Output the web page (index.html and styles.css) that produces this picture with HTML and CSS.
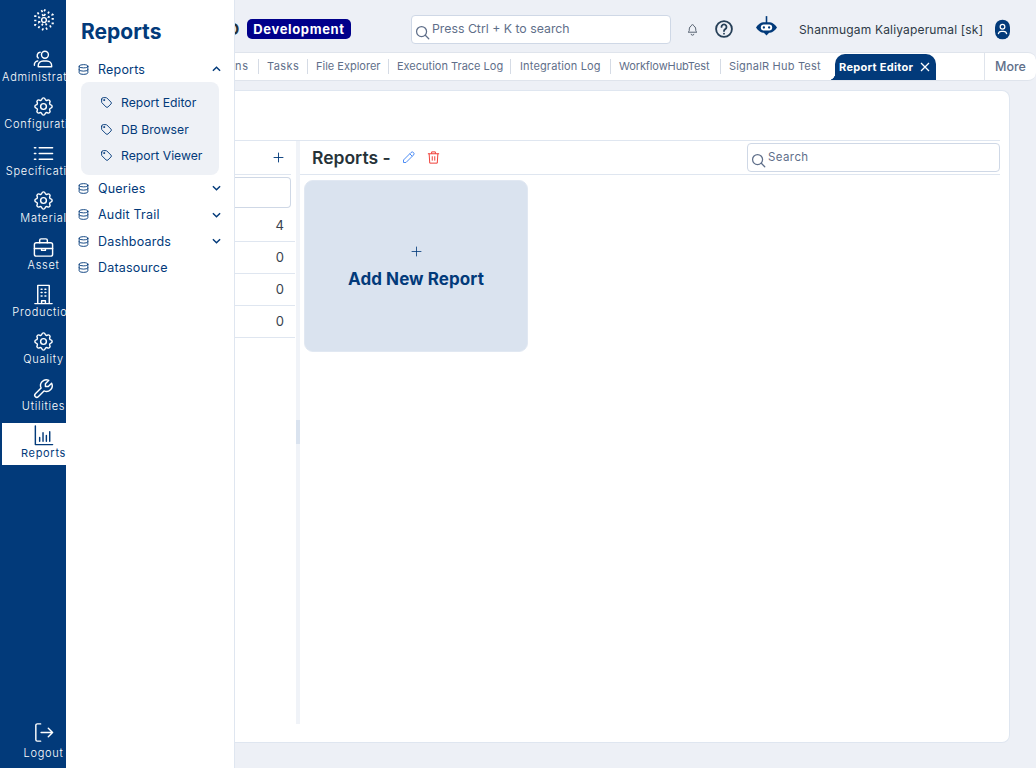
FILE: index.html
```html
<!DOCTYPE html>
<html lang="en">
<head>
    <meta charset="UTF-8">
    <meta name="viewport" content="width=device-width, initial-scale=1.0">
    <title>Reports</title>
    <link rel="stylesheet" href="styles.css">
</head>
<body>
    <svg class="sprite" aria-hidden="true">
        <symbol id="i-gear" viewBox="0 0 24 24"><path d="M10.325 4.317c.426-1.756 2.924-1.756 3.35 0a1.724 1.724 0 0 0 2.573 1.066c1.543-.94 3.31.826 2.37 2.37a1.724 1.724 0 0 0 1.065 2.572c1.756.426 1.756 2.924 0 3.35a1.724 1.724 0 0 0-1.066 2.573c.94 1.543-.826 3.31-2.37 2.37a1.724 1.724 0 0 0-2.572 1.065c-.426 1.756-2.924 1.756-3.35 0a1.724 1.724 0 0 0-2.573-1.066c-1.543.94-3.31-.826-2.37-2.37a1.724 1.724 0 0 0-1.065-2.572c-1.756-.426-1.756-2.924 0-3.35a1.724 1.724 0 0 0 1.066-2.573c-.94-1.543.826-3.31 2.37-2.37 1 .608 2.296.07 2.572-1.065z"/><circle cx="12" cy="12" r="3"/></symbol>
        <symbol id="i-users" viewBox="0 0 24 24"><circle cx="13.500" cy="7" r="3.600"/><path d="M6.500 19.500v-1a5 5 0 0 1 5-5h4a5 5 0 0 1 5 5v1z"/><path d="M8.500 4.500a3.500 3.500 0 0 0-2 6M6 13.500a4 4 0 0 0-3.500 4.500"/></symbol>
        <symbol id="i-list" viewBox="0 0 24 24"><path d="M7.500 6h14M7.500 12h14M7.500 18h14M2.500 6h1.500M2.500 12h1.500M2.500 18h1.500"/></symbol>
        <symbol id="i-case" viewBox="0 0 24 24"><rect x="2.500" y="7" width="19" height="14" rx="2"/><path d="M8 7V4.500a1.500 1.500 0 0 1 1.500-1.500h5a1.500 1.500 0 0 1 1.500 1.500V7M2.500 13h19M10 13v2h4v-2"/></symbol>
        <symbol id="i-building" viewBox="0 0 24 24"><path d="M3 21.500h18M6 21.500V2.500h12v19M10 21.500v-3h4v3M9.500 6.500h1M13.500 6.500h1M9.500 10h1M13.500 10h1M9.500 13.500h1M13.500 13.500h1"/></symbol>
        <symbol id="i-tool" viewBox="0 0 24 24"><path d="M7 10h3v-3l-3.500-3.500a6 6 0 0 1 8 8l6 6a2 2 0 0 1-3 3l-6-6a6 6 0 0 1-8-8z"/></symbol>
        <symbol id="i-chart" viewBox="0 0 24 24"><path d="M3.500 2v19.500h18M8 14v4M11.500 9v9M15 12v6M18.500 8v10"/></symbol>
        <symbol id="i-logout" viewBox="0 0 24 24"><path d="M9 3H5.500a1.500 1.500 0 0 0-1.500 1.500v15a1.500 1.500 0 0 0 1.500 1.500H9M9.500 12h12M17 7.500l4.500 4.500-4.500 4.500"/></symbol>
        <symbol id="i-db" viewBox="0 0 24 24"><ellipse cx="12" cy="6" rx="8" ry="3"/><path d="M4 6v6a8 3 0 0 0 16 0V6"/><path d="M4 12v6a8 3 0 0 0 16 0v-6"/></symbol>
        <symbol id="i-tag" viewBox="0 0 24 24"><circle cx="7.500" cy="7.500" r="1"/><path d="M3 6v5.172a2 2 0 0 0 .586 1.414l7.710 7.710a2.410 2.410 0 0 0 3.408 0l5.592-5.592a2.410 2.410 0 0 0 0-3.408l-7.710-7.710a2 2 0 0 0-1.414-.586H6a3 3 0 0 0-3 3z"/></symbol>
        <symbol id="i-search" viewBox="0 0 24 24"><circle cx="10.500" cy="10.500" r="8"/><path d="M16.500 16.500L22 22"/></symbol>
        <symbol id="i-plus" viewBox="0 0 24 24"><path d="M12 3v18M3 12h18"/></symbol>
    </svg>

    <div class="app">
        <nav class="rail">
            <div class="rail-logo">
                <svg class="rail-logo-icon" viewBox="0 0 24 24">
                    <path class="logo-dots" d="M12 1l9.500 5.500v11L12 23l-9.500-5.500v-11z"/>
                    <path class="logo-dots" d="M12 6l5.200 3v6L12 18l-5.200-3V9z"/>
                    <circle class="logo-ring" cx="12" cy="12" r="2.600"/>
                </svg>
            </div>
            <a class="rail-item"><svg class="ico"><use href="#i-users"/></svg><span>Administration</span></a>
            <a class="rail-item"><svg class="ico"><use href="#i-gear"/></svg><span>Configuration</span></a>
            <a class="rail-item"><svg class="ico"><use href="#i-list"/></svg><span>Specification</span></a>
            <a class="rail-item"><svg class="ico"><use href="#i-gear"/></svg><span>Material</span></a>
            <a class="rail-item"><svg class="ico"><use href="#i-case"/></svg><span>Asset</span></a>
            <a class="rail-item"><svg class="ico"><use href="#i-building"/></svg><span>Production</span></a>
            <a class="rail-item"><svg class="ico"><use href="#i-gear"/></svg><span>Quality</span></a>
            <a class="rail-item"><svg class="ico flip"><use href="#i-tool"/></svg><span>Utilities</span></a>
            <a class="rail-item active"><svg class="ico"><use href="#i-chart"/></svg><span>Reports</span></a>
            <a class="rail-item logout"><svg class="ico"><use href="#i-logout"/></svg><span>Logout</span></a>
        </nav>

        <aside class="panel">
            <h1 class="panel-title">Reports</h1>
            <div class="menu-row"><svg class="menu-ico"><use href="#i-db"/></svg><span>Reports</span>
                <svg class="chev up" viewBox="0 0 10 6"><path d="M1 1l4 4 4-4"/></svg></div>
            <div class="submenu">
                <div class="sub-row"><svg class="menu-ico"><use href="#i-tag"/></svg><span>Report Editor</span></div>
                <div class="sub-row"><svg class="menu-ico"><use href="#i-tag"/></svg><span>DB Browser</span></div>
                <div class="sub-row"><svg class="menu-ico"><use href="#i-tag"/></svg><span>Report Viewer</span></div>
            </div>
            <div class="menu-row"><svg class="menu-ico"><use href="#i-db"/></svg><span>Queries</span>
                <svg class="chev" viewBox="0 0 10 6"><path d="M1 1l4 4 4-4"/></svg></div>
            <div class="menu-row"><svg class="menu-ico"><use href="#i-db"/></svg><span>Audit Trail</span>
                <svg class="chev" viewBox="0 0 10 6"><path d="M1 1l4 4 4-4"/></svg></div>
            <div class="menu-row"><svg class="menu-ico"><use href="#i-db"/></svg><span>Dashboards</span>
                <svg class="chev" viewBox="0 0 10 6"><path d="M1 1l4 4 4-4"/></svg></div>
            <div class="menu-row"><svg class="menu-ico"><use href="#i-db"/></svg><span>Datasource</span></div>
        </aside>

        <main class="main">
            <header class="topbar">
                <span class="brand-end">O</span>
                <span class="env-badge">Development</span>
                <div class="global-search">
                    <svg class="search-ico"><use href="#i-search"/></svg>
                    <span>Press Ctrl + K to search</span>
                </div>
                <svg class="bell" viewBox="0 0 24 24"><path d="M10 5a2 2 0 1 1 4 0 7 7 0 0 1 4 6v3a4 4 0 0 0 2 3H4a4 4 0 0 0 2-3v-3a7 7 0 0 1 4-6M9.500 20a2.500 2.500 0 0 0 5 0"/></svg>
                <svg class="help" viewBox="0 0 24 24"><circle cx="12" cy="12" r="9.500"/><path d="M9 9.500a3 3 0 1 1 4.500 2.600c-1 .6-1.500 1.200-1.500 2.400M12 17.500v.1"/></svg>
                <svg class="bot" viewBox="0 0 24 26"><path class="bot-stem" d="M12 0v8"/><path class="bot-fill" d="M8 7h8c3 0 6 3 8 6-2 3-5 6-8 6h-1l-3 3-3-3H8c-3 0-6-3-8-6 2-3 5-6 8-6z"/><rect class="bot-eye" x="5.500" y="9.500" width="13" height="7" rx="3.500"/><circle class="bot-fill" cx="9" cy="13" r="1.300"/><circle class="bot-fill" cx="15" cy="13" r="1.300"/></svg>
                <span class="user-name">Shanmugam Kaliyaperumal [sk]</span>
                <svg class="avatar" viewBox="0 0 16 21"><rect class="bot-fill" width="16" height="21" rx="8"/><circle class="avatar-line" cx="8" cy="7.500" r="2.500"/><path class="avatar-line" d="M3.500 15.500a3.500 3.500 0 0 1 3.500-3h2a3.500 3.500 0 0 1 3.500 3"/></svg>
            </header>

            <div class="tabbar">
                <div class="tabs">
                    <span class="tab tab-clip">Notifications</span>
                    <span class="tab tab-tasks">Tasks</span>
                    <span class="tab tab-files">File Explorer</span>
                    <span class="tab tab-trace">Execution Trace Log</span>
                    <span class="tab tab-integ">Integration Log</span>
                    <span class="tab tab-flow">WorkflowHubTest</span>
                    <span class="tab tab-signal">SignalR Hub Test</span>
                    <span class="tab-active">Report Editor
                        <svg class="tab-x" viewBox="0 0 10 10"><path d="M1 1l8 8M9 1l-8 8"/></svg>
                    </span>
                </div>
                <span class="more">More</span>
            </div>

            <section class="card">
                <div class="card-body">
                    <div class="left-col">
                        <div class="left-head"><svg class="add-ico"><use href="#i-plus"/></svg></div>
                        <div class="left-filter"></div>
                        <div class="count-row first">4</div>
                        <div class="count-row">0</div>
                        <div class="count-row">0</div>
                        <div class="count-row">0</div>
                    </div>
                    <div class="splitter"><div class="splitter-grip"></div></div>
                    <div class="right-col">
                        <div class="right-head">
                            <h2 class="right-title">Reports -</h2>
                            <svg class="act-ico edit" viewBox="0 0 24 24"><path d="M4 20v-4L16 4a2.800 2.800 0 0 1 4 4L8 20zM14 6l4 4"/></svg>
                            <svg class="act-ico trash" viewBox="0 0 24 24"><path d="M3 6h18M5 6l1 15h12l1-15M9 6V3h6v3M10 10v7M14 10v7"/></svg>
                            <div class="report-search">
                                <svg class="search-ico"><use href="#i-search"/></svg>
                                <span>Search</span>
                            </div>
                        </div>
                        <div class="report-grid">
                            <div class="add-card">
                                <svg class="add-card-ico"><use href="#i-plus"/></svg>
                                <span>Add New Report</span>
                            </div>
                        </div>
                    </div>
                </div>
            </section>
        </main>
    </div>
</body>
</html>
```

FILE: styles.css
```css
* {
    margin: 0;
    padding: 0;
    box-sizing: border-box;
}

body {
    font-family: 'Inter', 'Liberation Sans', sans-serif;
    background: #edf0f6;
    color: #1f2d3d;
    overflow: hidden;
}

.sprite {
    display: none;
}

.app {
    display: flex;
    width: 1036px;
    height: 768px;
}

/* left rail */
.rail {
    width: 66px;
    flex: none;
    height: 768px;
    background: #023a7a;
    color: #fff;
    overflow: hidden;
    padding-left: 2px;
    display: flex;
    flex-direction: column;
}

.rail-logo {
    width: 83px;
    height: 45px;
    padding-top: 9px;
    display: flex;
    justify-content: center;
    flex: none;
}

.rail-logo-icon {
    width: 22px;
    height: 22px;
    fill: none;
}

.logo-dots {
    stroke: #fff;
    stroke-width: 2.400;
    stroke-dasharray: 1.800 3;
    fill: none;
}

.logo-ring {
    stroke: #fff;
    stroke-width: 1.500;
}

.rail-item {
    width: 83px;
    height: 47px;
    flex: none;
    display: flex;
    flex-direction: column;
    align-items: center;
    padding-top: 3px;
    font-size: 11px;
    font-weight: 300;
    letter-spacing: 0.7px;
    line-height: 14px;
    white-space: nowrap;
}

.rail-item .ico {
    width: 23px;
    height: 23px;
    margin-bottom: -1px;
    flex: none;
    fill: none;
    stroke: currentColor;
    stroke-width: 1.500;
    stroke-linecap: round;
    stroke-linejoin: round;
}

.rail-item .flip {
    transform: scaleX(-1);
}

.rail-item.active {
    background: #fff;
    color: #023a7a;
    font-weight: 400;
    height: 42px;
    margin-top: 2px;
    padding-top: 1px;
}

.rail-item.logout {
    margin-top: auto;
    padding-top: 0;
}

.rail-item.logout .ico {
    margin-bottom: 2px;
}

/* flyout menu */
.panel {
    width: 169px;
    flex: none;
    height: 768px;
    background: #fff;
    border-right: 1px solid #dfe6f0;
    color: #023a7a;
    padding: 18px 15px 0 11px;
}

.panel-title {
    font-size: 21px;
    font-weight: 700;
    line-height: 28px;
    margin-left: 4px;
    margin-bottom: 10px;
}

.menu-row {
    display: flex;
    align-items: center;
    height: 26.300px;
    font-size: 12.500px;
    letter-spacing: 0.2px;
    white-space: nowrap;
}

.menu-ico {
    width: 13px;
    height: 13px;
    flex: none;
    margin-right: 8px;
    fill: none;
    stroke: currentColor;
    stroke-width: 1.700;
    stroke-linecap: round;
    stroke-linejoin: round;
}

.chev {
    width: 9px;
    height: 6px;
    margin-left: auto;
    margin-right: -2px;
    fill: none;
    stroke: currentColor;
    stroke-width: 1.600;
}

.chev.up {
    transform: rotate(180deg);
}

.submenu {
    margin: 0 0 0 4px;
    width: 138px;
    height: 93px;
    background: #eef1f6;
    border-radius: 8px;
    padding: 7px 0 0 19px;
}

.sub-row {
    display: flex;
    align-items: center;
    height: 26.500px;
    font-size: 12.200px;
    white-space: nowrap;
}

/* main area */
.main {
    flex: 1;
    min-width: 0;
    height: 768px;
    overflow: hidden;
    display: flex;
    flex-direction: column;
}

.topbar {
    height: 52px;
    flex: none;
    display: flex;
    align-items: center;
    padding-top: 6px;
}

.brand-end {
    width: 12px;
    margin-left: -8px;
    font-size: 16px;
    font-weight: 700;
    text-align: right;
    flex: none;
    color: #263238;
}

.env-badge {
    margin-left: 8px;
    width: 104px;
    height: 20px;
    flex: none;
    background: #00008b;
    color: #fff;
    border-radius: 5px;
    font-size: 13px;
    font-weight: 700;
    letter-spacing: 0.65px;
    line-height: 20px;
    text-align: center;
}

.global-search {
    margin-left: 60px;
    width: 260px;
    height: 29px;
    flex: none;
    background: #fff;
    border: 1px solid #cfd8e6;
    border-radius: 4px;
    display: flex;
    padding-left: 3px;
    color: #5f6f8a;
    font-size: 12.300px;
    line-height: 26px;
}

.search-ico {
    width: 15px;
    height: 15px;
    margin-top: 9px;
    margin-right: 2px;
    flex: none;
    fill: none;
    stroke: #5f6f8a;
    stroke-width: 2;
    stroke-linecap: round;
}

.bell {
    width: 13px;
    height: 13px;
    margin-left: 15px;
    flex: none;
    fill: none;
    stroke: #55616f;
    stroke-width: 1.800;
}

.help {
    width: 20px;
    height: 20px;
    margin-left: 15px;
    flex: none;
    fill: none;
    stroke: #263f57;
    stroke-width: 2.200;
    stroke-linecap: round;
}

.bot {
    width: 21px;
    height: 23px;
    margin-left: 22px;
    margin-top: -3px;
    flex: none;
}

.bot-stem {
    stroke: #023a7a;
    stroke-width: 1.800;
}

.bot-fill {
    fill: #023a7a;
}

.bot-eye {
    fill: #fff;
}

.user-name {
    margin-left: 22px;
    font-size: 12px;
    letter-spacing: 0.17px;
    color: #2d3a46;
    white-space: nowrap;
    width: 196px;
    flex: none;
}

.avatar {
    width: 15px;
    height: 21px;
    flex: none;
}

.avatar-line {
    fill: none;
    stroke: #fff;
    stroke-width: 1.300;
}

/* tab strip */
.tabbar {
    height: 29px;
    flex: none;
    background: #fff;
    border-top: 1px solid #dfe4ec;
    border-bottom: 1px solid #dfe4ec;
    border-radius: 0 8px 8px 0;
    display: flex;
    align-items: stretch;
}

.tabs {
    width: 749px;
    flex: none;
    display: flex;
    align-items: center;
    overflow: hidden;
}

.tab {
    flex: none;
    height: 15px;
    padding-left: 8px;
    border-right: 1px solid #d5dbe5;
    font-size: 11px;
    line-height: 15px;
    color: #5f6f8a;
    white-space: nowrap;
}

.tab-clip {
    width: 100px;
    margin-left: -76px;
    padding: 0 9px 0 0;
    letter-spacing: 0.9px;
    text-align: right;
}

.tab-tasks { width: 49px; letter-spacing: 0.4px; }
.tab-files { width: 81px; }
.tab-trace { width: 122px; }
.tab-integ { width: 100px; padding-left: 9px; letter-spacing: 0.15px; }
.tab-flow { width: 110px; letter-spacing: -0.1px; }
.tab-signal { width: 100px; border-right: 0; letter-spacing: 0.2px; }

.tab-active {
    flex: none;
    width: 101px;
    height: 26px;
    margin-left: 14px;
    margin-top: 1px;
    background: #023a7a;
    color: #fff;
    font-size: 11px;
    font-weight: 700;
    letter-spacing: 0.3px;
    border-radius: 10px 10px 0 0;
    padding-left: 4px;
    display: flex;
    align-items: center;
    white-space: nowrap;
    position: relative;
}

.tab-active::before {
    content: "";
    position: absolute;
    left: -7px;
    bottom: 0;
    width: 7px;
    height: 7px;
    background: radial-gradient(circle at 0 0, transparent 7px, #023a7a 7.500px);
}

.tab-x {
    width: 10px;
    height: 10px;
    margin-left: auto;
    margin-right: 6px;
    fill: none;
    stroke: #fff;
    stroke-width: 1.300;
}

.more {
    width: 52px;
    flex: none;
    border-left: 1px solid #dfe4ec;
    color: #5f6f8a;
    font-size: 12.500px;
    font-weight: 500;
    line-height: 27px;
    text-align: center;
}

/* content card */
.card {
    width: 775px;
    height: 653px;
    flex: none;
    margin-top: 9px;
    background: #fff;
    border: 1px solid #dfe6f0;
    border-left: 0;
    border-radius: 0 8px 8px 0;
    padding: 49px 9px 0 0;
}

.card-body {
    height: 584px;
    border-top: 1px solid #dfe6f0;
    display: flex;
}

.left-col {
    width: 61px;
    flex: none;
    font-size: 13px;
}

.left-head {
    height: 34px;
    width: 56px;
    border-bottom: 1px solid #dfe6f0;
    display: flex;
    align-items: center;
    justify-content: flex-end;
    padding-right: 6px;
}

.add-ico {
    width: 13px;
    height: 13px;
    fill: none;
    stroke: #023a7a;
    stroke-width: 1.700;
}

.left-filter {
    width: 56px;
    height: 31px;
    margin-top: 2px;
    background: #fff;
    border: 1px solid #cfd8e6;
    border-left: 0;
    border-radius: 0 4px 4px 0;
}

.count-row {
    height: 32px;
    margin-right: 1px;
    padding-right: 11px;
    border-bottom: 1px solid #dfe6f0;
    line-height: 31px;
    text-align: right;
    color: #37424e;
}

.count-row.first {
    height: 34px;
    line-height: 35px;
}

.splitter {
    width: 4px;
    flex: none;
    background: #f0f3f8;
    display: flex;
    flex-direction: column;
    justify-content: flex-start;
}

.splitter-grip {
    height: 24px;
    margin-top: 279px;
    background: #dae3ef;
}

.right-col {
    flex: 1;
    min-width: 0;
}

.right-head {
    height: 34px;
    border-bottom: 1px solid #dfe6f0;
    padding-left: 12px;
    display: flex;
    align-items: center;
}

.right-title {
    font-size: 17.500px;
    font-weight: 600;
    color: #263238;
    width: 89px;
    flex: none;
    white-space: nowrap;
}

.act-ico {
    width: 15px;
    height: 15px;
    flex: none;
    fill: none;
    stroke-width: 1.600;
    stroke-linejoin: round;
}

.edit {
    stroke: #4d8df5;
}

.trash {
    stroke: #f0413a;
    margin-left: 10px;
}

.report-search {
    margin-left: auto;
    width: 253px;
    height: 29px;
    background: #fff;
    border: 1px solid #cfd8e6;
    border-radius: 4px;
    display: flex;
    padding-left: 3px;
    color: #5f6f8a;
    font-size: 11.500px;
    letter-spacing: 0.4px;
    line-height: 26px;
}

.report-grid {
    padding: 5px 0 0 4px;
}

.add-card {
    width: 224px;
    height: 172px;
    background: #dae3ef;
    border: 1px solid #e1e8f2;
    border-radius: 9px;
    display: flex;
    flex-direction: column;
    align-items: center;
    padding-top: 64px;
    color: #023a7a;
    font-size: 17px;
    font-weight: 700;
    letter-spacing: 0.08px;
    line-height: 24px;
}

.add-card-ico {
    width: 13px;
    height: 13px;
    margin-bottom: 9px;
    fill: none;
    stroke: #023a7a;
    stroke-width: 1.500;
}
```
